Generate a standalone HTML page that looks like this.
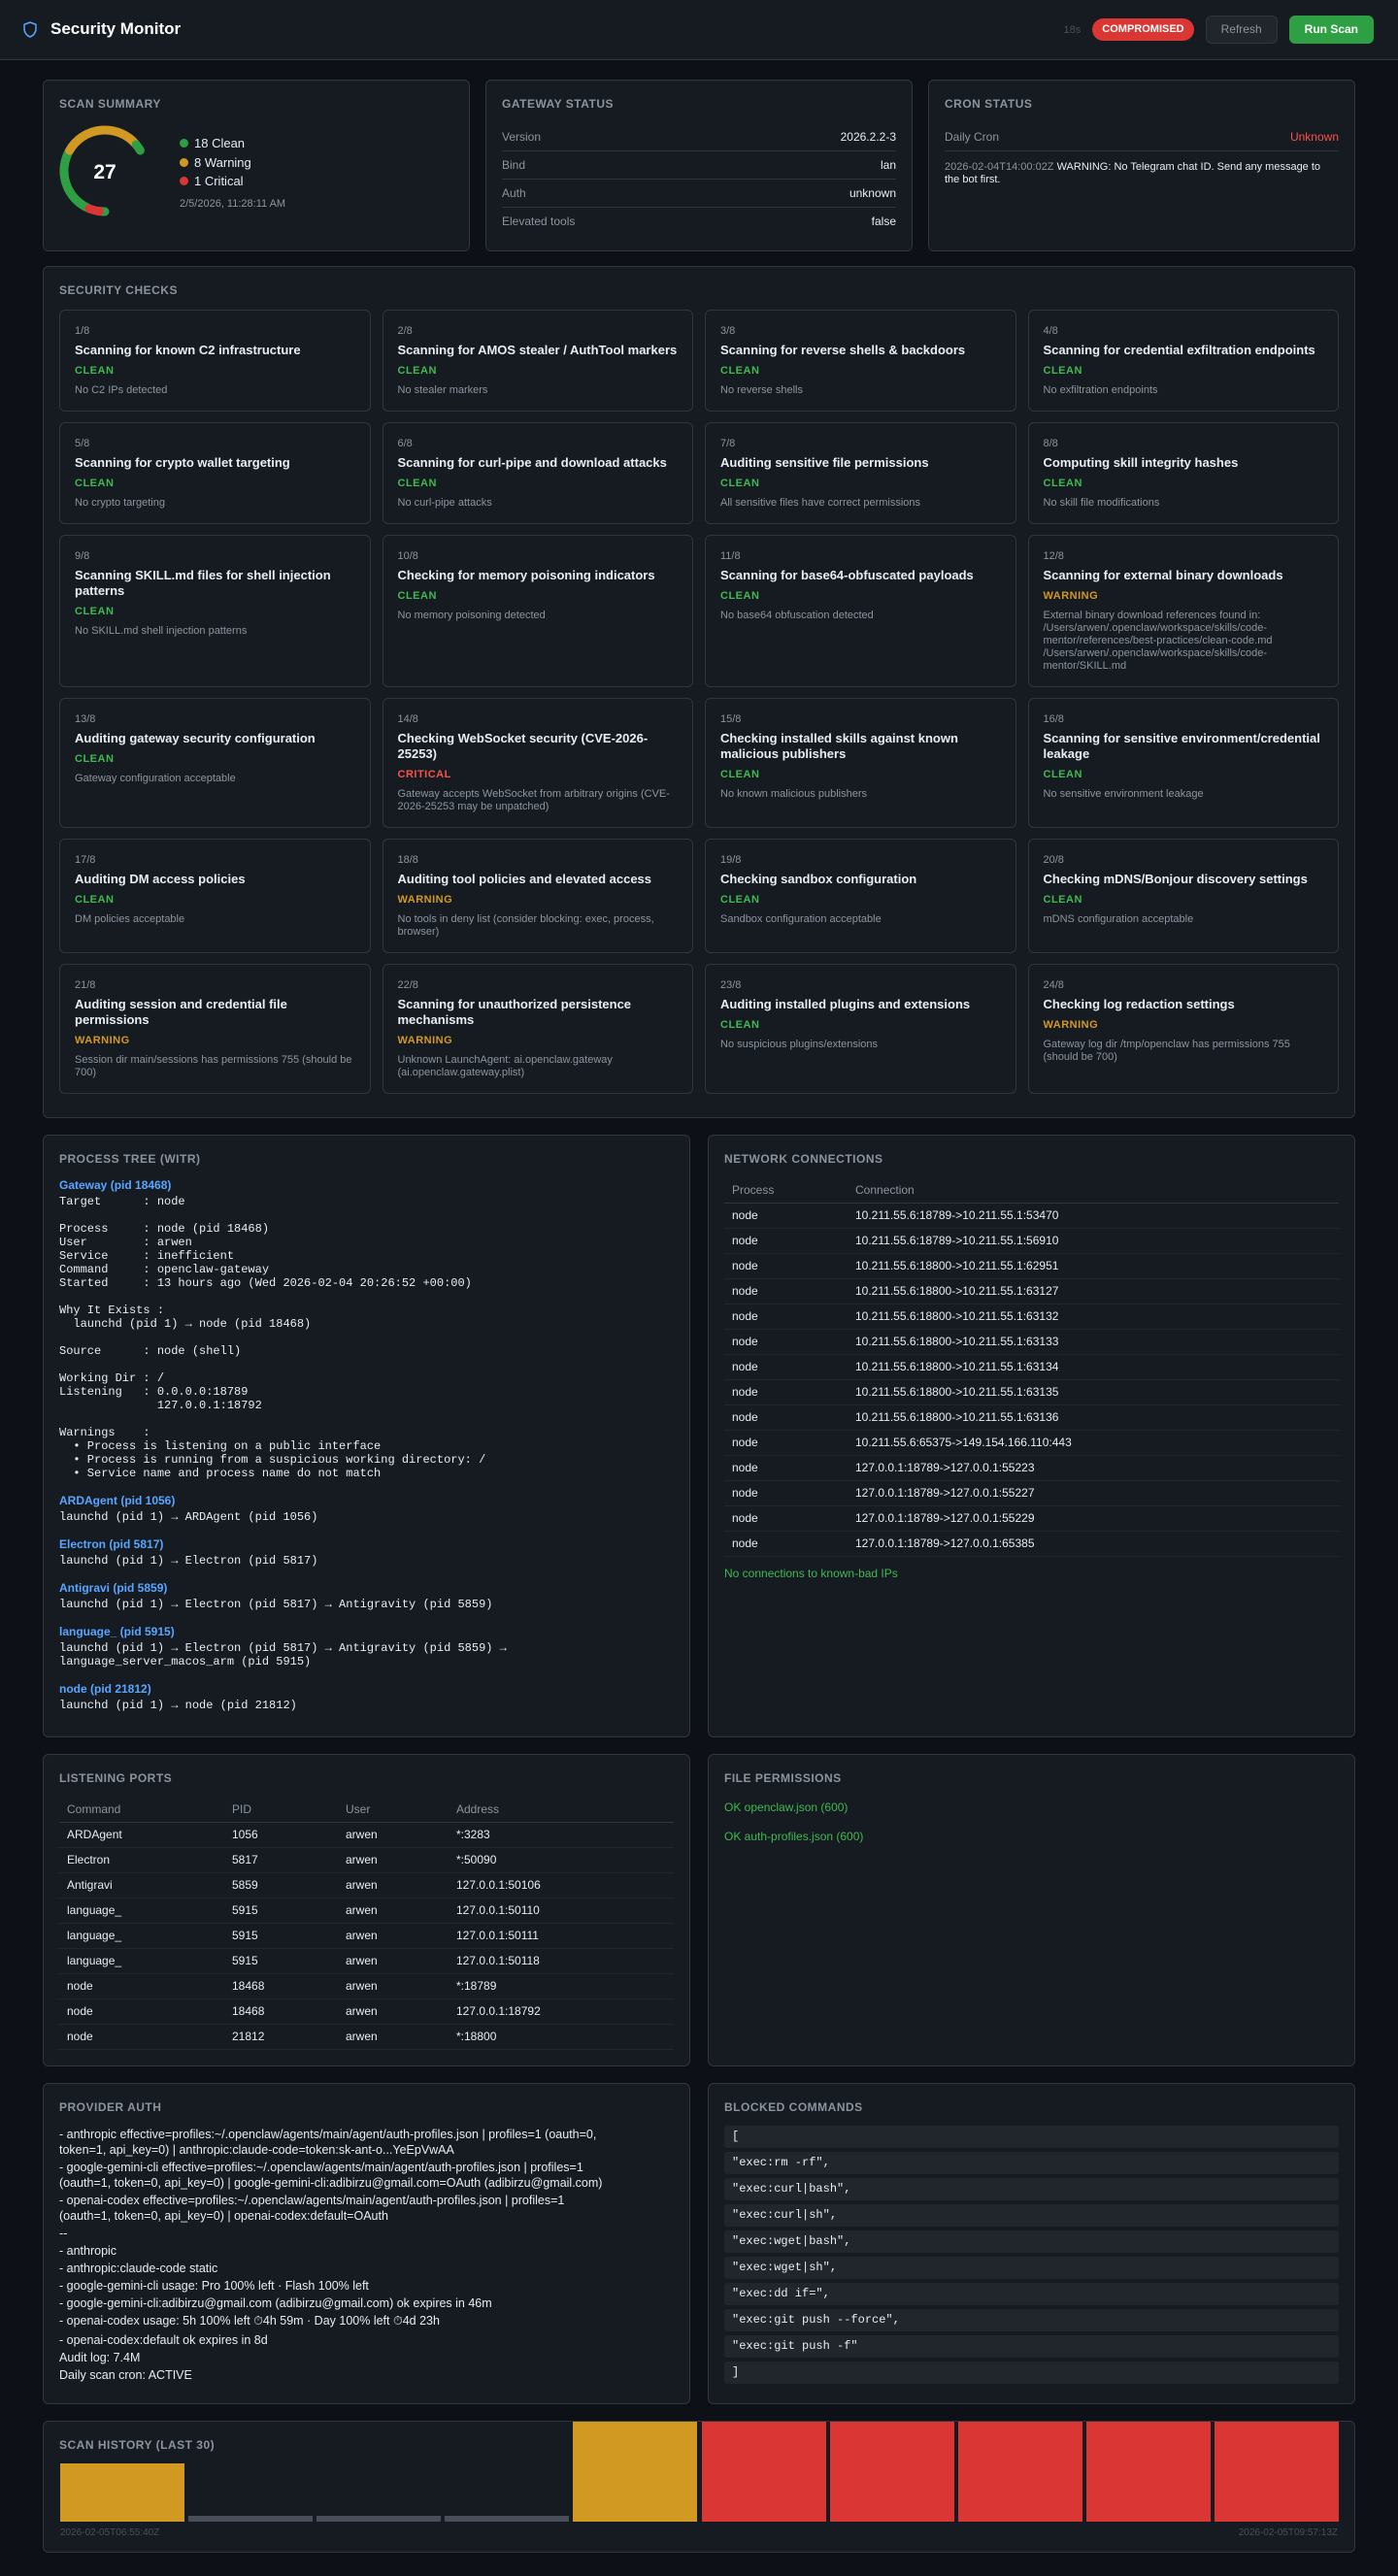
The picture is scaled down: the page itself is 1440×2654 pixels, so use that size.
<!DOCTYPE html>
<html><head><meta charset="utf-8"><style>
*{box-sizing:border-box;margin:0;padding:0}
body{width:1440px;height:2654px;background:#0d1117;color:#e6edf3;font-family:"Liberation Sans",sans-serif;font-size:12px;overflow:hidden}
.hdr{height:62px;background:#161b22;border-bottom:1px solid #30363d;position:relative}
.hdr .t{position:absolute;left:22px;top:20px;font-size:17px;font-weight:bold;display:flex;align-items:center;gap:12px;color:#fff}
.hdr .r{position:absolute;right:25px;top:16px;display:flex;align-items:center;gap:12px}
.pill{background:#da3633;color:#fff;font-weight:bold;font-size:11px;border-radius:12px;height:23px;line-height:23px;padding:0 10px}
.btn{height:29px;line-height:27px;border-radius:6px;padding:0 15px;font-size:12px;border:1px solid #30363d;background:#21262d;color:#8b949e}
.btn.g{background:#2ea043;border-color:#2ea043;color:#fff;font-weight:bold}
.main{padding:20px 44px 0 44px}
.panel{background:#161b22;border:1px solid #30363d;border-radius:6px;padding:16px}
.pt{font-size:12px;font-weight:bold;color:#8b949e;letter-spacing:.5px;text-transform:uppercase;line-height:16px;margin-bottom:12px}
.g3{display:grid;grid-template-columns:1fr 1fr 1fr;gap:16px;height:175px}
.g2{display:grid;grid-template-columns:1fr 1fr;gap:18px;margin-top:17px}
.row{display:flex;justify-content:space-between;padding:7px 0;line-height:14px;border-bottom:1px solid #30363d;font-size:12px}
.row:last-child{border-bottom:none}
.row span:first-child{color:#8b949e}
.grid4{display:grid;grid-template-columns:repeat(4,1fr);gap:11px 12px}
.c{border:1px solid #30363d;border-radius:6px;padding:14px 15px}
.c .m{font-size:11px;color:#8b949e;line-height:14px;margin-bottom:5px}
.c .h{font-size:13px;font-weight:bold;line-height:16px;margin-bottom:6px}
.c .s{font-size:11px;font-weight:bold;letter-spacing:.5px;line-height:14px;margin-bottom:7px}
.c .d{font-size:11px;color:#8b949e;line-height:13px}
.ok{color:#3fb950}.wn{color:#d29922}.cr{color:#f85149}
pre{font-family:"Liberation Mono",monospace;font-size:12px;line-height:14px;color:#e6edf3;white-space:pre}
.ph{color:#58a6ff;font-weight:bold;font-size:12px;line-height:16px;margin-bottom:2px}
.blk{margin-bottom:13px}
table{width:100%;border-collapse:collapse;font-size:12px}
th{text-align:left;color:#8b949e;font-weight:normal;padding:6px 8px 5px;line-height:15px;border-bottom:1px solid #30363d}
td{padding:5px 8px;line-height:15px;border-bottom:1px solid #21262d}
.pa p{line-height:16px;margin-bottom:2px;font-size:12.5px;white-space:nowrap}
.bc{background:#21262d;border-radius:3px;height:23px;line-height:23px;padding:0 8px;margin-bottom:4px;font-family:"Liberation Mono",monospace;font-size:12px}
.hist{position:relative;height:136px;margin-top:17px}
.bar{position:absolute;width:128px;bottom:31px}
</style></head><body>
<div class="hdr">
 <div class="t"><svg width="18" height="19" viewBox="0 0 24 24" fill="none" stroke="#58a6ff" stroke-width="2" stroke-linejoin="round"><path d="M12 2 4 5v6c0 5 3.4 9.4 8 11 4.6-1.6 8-6 8-11V5z"/></svg>Security Monitor</div>
 <div class="r"><span style="color:#484f58;font-size:11px">18s</span><span class="pill">COMPROMISED</span><span class="btn">Refresh</span><span class="btn g">Run Scan</span></div>
</div>
<div class="main">
<div class="g3">
 <div class="panel" style="position:relative"><div class="pt">Scan Summary</div>
  <svg style="position:absolute;left:16px;top:44px" width="96" height="100" viewBox="0 0 96 100" fill="none" stroke-width="9" stroke-linecap="round">
   <path d="M47 91A42 42 0 0 1 41.2 90.6" stroke="#2ea043"/>
   <path d="M29.2 87.1A42 42 0 0 1 10.6 28" stroke="#2ea043"/>
   <path d="M10.6 28A42 42 0 0 1 79.2 22" stroke="#d29922"/>
   <path d="M79.2 22A42 42 0 0 1 83.4 28" stroke="#2ea043"/>
   <path d="M41.2 90.6A42 42 0 0 1 31 88" stroke="#da3633"/>
   <text x="47" y="57" fill="#fff" font-size="21" font-weight="bold" text-anchor="middle" stroke="none" font-family="Liberation Sans">27</text>
  </svg>
  <div style="position:absolute;left:140px;top:55px;font-size:13px;line-height:19.5px">
   <div><span style="display:inline-block;width:9px;height:9px;border-radius:50%;background:#2ea043;margin-right:6px"></span>18 Clean</div>
   <div><span style="display:inline-block;width:9px;height:9px;border-radius:50%;background:#d29922;margin-right:6px"></span>8 Warning</div>
   <div><span style="display:inline-block;width:9px;height:9px;border-radius:50%;background:#da3633;margin-right:6px"></span>1 Critical</div>
   <div style="font-size:11px;color:#8b949e;margin-top:4px">2/5/2026, 11:28:11 AM</div>
  </div>
 </div>
 <div class="panel"><div class="pt">Gateway Status</div>
  <div class="row"><span>Version</span><span>2026.2.2-3</span></div>
  <div class="row"><span>Bind</span><span>lan</span></div>
  <div class="row"><span>Auth</span><span>unknown</span></div>
  <div class="row"><span>Elevated tools</span><span>false</span></div>
 </div>
 <div class="panel"><div class="pt">Cron Status</div>
  <div class="row" style="border-bottom:1px solid #30363d"><span>Daily Cron</span><span class="cr">Unknown</span></div>
  <div style="font-size:11px;line-height:13px;margin-top:10px;padding-right:12px"><span style="color:#8b949e">2026-02-04T14:00:02Z</span> WARNING: No Telegram chat ID. Send any message to the bot first.</div>
 </div>
</div>

<div class="panel" style="margin-top:17px;padding-bottom:24px"><div class="pt">Security Checks</div>
<div class="grid4">
<div class="c"><div class="m">1/8</div><div class="h">Scanning for known C2 infrastructure</div><div class="s ok">CLEAN</div><div class="d">No C2 IPs detected</div></div>
<div class="c"><div class="m">2/8</div><div class="h">Scanning for AMOS stealer / AuthTool markers</div><div class="s ok">CLEAN</div><div class="d">No stealer markers</div></div>
<div class="c"><div class="m">3/8</div><div class="h">Scanning for reverse shells &amp; backdoors</div><div class="s ok">CLEAN</div><div class="d">No reverse shells</div></div>
<div class="c"><div class="m">4/8</div><div class="h">Scanning for credential exfiltration endpoints</div><div class="s ok">CLEAN</div><div class="d">No exfiltration endpoints</div></div>
<div class="c"><div class="m">5/8</div><div class="h">Scanning for crypto wallet targeting</div><div class="s ok">CLEAN</div><div class="d">No crypto targeting</div></div>
<div class="c"><div class="m">6/8</div><div class="h">Scanning for curl-pipe and download attacks</div><div class="s ok">CLEAN</div><div class="d">No curl-pipe attacks</div></div>
<div class="c"><div class="m">7/8</div><div class="h">Auditing sensitive file permissions</div><div class="s ok">CLEAN</div><div class="d">All sensitive files have correct permissions</div></div>
<div class="c"><div class="m">8/8</div><div class="h">Computing skill integrity hashes</div><div class="s ok">CLEAN</div><div class="d">No skill file modifications</div></div>
<div class="c"><div class="m">9/8</div><div class="h">Scanning SKILL.md files for shell injection patterns</div><div class="s ok">CLEAN</div><div class="d">No SKILL.md shell injection patterns</div></div>
<div class="c"><div class="m">10/8</div><div class="h">Checking for memory poisoning indicators</div><div class="s ok">CLEAN</div><div class="d">No memory poisoning detected</div></div>
<div class="c"><div class="m">11/8</div><div class="h">Scanning for base64-obfuscated payloads</div><div class="s ok">CLEAN</div><div class="d">No base64 obfuscation detected</div></div>
<div class="c"><div class="m">12/8</div><div class="h">Scanning for external binary downloads</div><div class="s wn">WARNING</div><div class="d">External binary download references found in: /Users/arwen/.openclaw/workspace/skills/code-mentor/references/best-practices/clean-code.md /Users/arwen/.openclaw/workspace/skills/code-mentor/SKILL.md</div></div>
<div class="c"><div class="m">13/8</div><div class="h">Auditing gateway security configuration</div><div class="s ok">CLEAN</div><div class="d">Gateway configuration acceptable</div></div>
<div class="c"><div class="m">14/8</div><div class="h">Checking WebSocket security (CVE-2026-25253)</div><div class="s cr">CRITICAL</div><div class="d">Gateway accepts WebSocket from arbitrary origins (CVE-2026-25253 may be unpatched)</div></div>
<div class="c"><div class="m">15/8</div><div class="h">Checking installed skills against known malicious publishers</div><div class="s ok">CLEAN</div><div class="d">No known malicious publishers</div></div>
<div class="c"><div class="m">16/8</div><div class="h">Scanning for sensitive environment/credential leakage</div><div class="s ok">CLEAN</div><div class="d">No sensitive environment leakage</div></div>
<div class="c"><div class="m">17/8</div><div class="h">Auditing DM access policies</div><div class="s ok">CLEAN</div><div class="d">DM policies acceptable</div></div>
<div class="c"><div class="m">18/8</div><div class="h">Auditing tool policies and elevated access</div><div class="s wn">WARNING</div><div class="d">No tools in deny list (consider blocking: exec, process, browser)</div></div>
<div class="c"><div class="m">19/8</div><div class="h">Checking sandbox configuration</div><div class="s ok">CLEAN</div><div class="d">Sandbox configuration acceptable</div></div>
<div class="c"><div class="m">20/8</div><div class="h">Checking mDNS/Bonjour discovery settings</div><div class="s ok">CLEAN</div><div class="d">mDNS configuration acceptable</div></div>
<div class="c"><div class="m">21/8</div><div class="h">Auditing session and credential file permissions</div><div class="s wn">WARNING</div><div class="d">Session dir main/sessions has permissions 755 (should be 700)</div></div>
<div class="c"><div class="m">22/8</div><div class="h">Scanning for unauthorized persistence mechanisms</div><div class="s wn">WARNING</div><div class="d">Unknown LaunchAgent: ai.openclaw.gateway (ai.openclaw.gateway.plist)</div></div>
<div class="c"><div class="m">23/8</div><div class="h">Auditing installed plugins and extensions</div><div class="s ok">CLEAN</div><div class="d">No suspicious plugins/extensions</div></div>
<div class="c"><div class="m">24/8</div><div class="h">Checking log redaction settings</div><div class="s wn">WARNING</div><div class="d">Gateway log dir /tmp/openclaw has permissions 755 (should be 700)</div></div>
</div></div>

<div class="g2">
<div class="panel" style="padding-bottom:12px"><div class="pt" style="margin-bottom:11px">Process Tree (WITR)</div>
<div class="blk"><div class="ph">Gateway (pid 18468)</div><pre>Target      : node

Process     : node (pid 18468)
User        : arwen
Service     : inefficient
Command     : openclaw-gateway
Started     : 13 hours ago (Wed 2026-02-04 20:26:52 +00:00)

Why It Exists :
  launchd (pid 1) → node (pid 18468)

Source      : node (shell)

Working Dir : /
Listening   : 0.0.0.0:18789
              127.0.0.1:18792

Warnings    :
  • Process is listening on a public interface
  • Process is running from a suspicious working directory: /
  • Service name and process name do not match</pre></div>
<div class="blk"><div class="ph">ARDAgent (pid 1056)</div><pre>launchd (pid 1) → ARDAgent (pid 1056)</pre></div>
<div class="blk"><div class="ph">Electron (pid 5817)</div><pre>launchd (pid 1) → Electron (pid 5817)</pre></div>
<div class="blk"><div class="ph">Antigravi (pid 5859)</div><pre>launchd (pid 1) → Electron (pid 5817) → Antigravity (pid 5859)</pre></div>
<div class="blk"><div class="ph">language_ (pid 5915)</div><pre>launchd (pid 1) → Electron (pid 5817) → Antigravity (pid 5859) →
language_server_macos_arm (pid 5915)</pre></div>
<div class="blk"><div class="ph">node (pid 21812)</div><pre>launchd (pid 1) → node (pid 21812)</pre></div>
</div>
<div class="panel"><div class="pt" style="margin-bottom:11px">Network Connections</div>
<table><tr><th style="width:127px">Process</th><th>Connection</th></tr>
<tr><td>node</td><td>10.211.55.6:18789-&gt;10.211.55.1:53470</td></tr>
<tr><td>node</td><td>10.211.55.6:18789-&gt;10.211.55.1:56910</td></tr>
<tr><td>node</td><td>10.211.55.6:18800-&gt;10.211.55.1:62951</td></tr>
<tr><td>node</td><td>10.211.55.6:18800-&gt;10.211.55.1:63127</td></tr>
<tr><td>node</td><td>10.211.55.6:18800-&gt;10.211.55.1:63132</td></tr>
<tr><td>node</td><td>10.211.55.6:18800-&gt;10.211.55.1:63133</td></tr>
<tr><td>node</td><td>10.211.55.6:18800-&gt;10.211.55.1:63134</td></tr>
<tr><td>node</td><td>10.211.55.6:18800-&gt;10.211.55.1:63135</td></tr>
<tr><td>node</td><td>10.211.55.6:18800-&gt;10.211.55.1:63136</td></tr>
<tr><td>node</td><td>10.211.55.6:65375-&gt;149.154.166.110:443</td></tr>
<tr><td>node</td><td>127.0.0.1:18789-&gt;127.0.0.1:55223</td></tr>
<tr><td>node</td><td>127.0.0.1:18789-&gt;127.0.0.1:55227</td></tr>
<tr><td>node</td><td>127.0.0.1:18789-&gt;127.0.0.1:55229</td></tr>
<tr><td>node</td><td>127.0.0.1:18789-&gt;127.0.0.1:65385</td></tr>
</table>
<div class="ok" style="margin-top:10px;line-height:15px">No connections to known-bad IPs</div>
</div>
</div>

<div class="g2">
<div class="panel"><div class="pt" style="margin-bottom:11px">Listening Ports</div>
<table><tr><th style="width:170px">Command</th><th style="width:117px">PID</th><th style="width:114px">User</th><th>Address</th></tr>
<tr><td>ARDAgent</td><td>1056</td><td>arwen</td><td>*:3283</td></tr>
<tr><td>Electron</td><td>5817</td><td>arwen</td><td>*:50090</td></tr>
<tr><td>Antigravi</td><td>5859</td><td>arwen</td><td>127.0.0.1:50106</td></tr>
<tr><td>language_</td><td>5915</td><td>arwen</td><td>127.0.0.1:50110</td></tr>
<tr><td>language_</td><td>5915</td><td>arwen</td><td>127.0.0.1:50111</td></tr>
<tr><td>language_</td><td>5915</td><td>arwen</td><td>127.0.0.1:50118</td></tr>
<tr><td>node</td><td>18468</td><td>arwen</td><td>*:18789</td></tr>
<tr><td>node</td><td>18468</td><td>arwen</td><td>127.0.0.1:18792</td></tr>
<tr><td>node</td><td>21812</td><td>arwen</td><td>*:18800</td></tr>
</table></div>
<div class="panel"><div class="pt">File Permissions</div>
<div class="ok" style="line-height:16px;margin-top:14px">OK openclaw.json (600)</div>
<div class="ok" style="line-height:16px;margin-top:14px">OK auth-profiles.json (600)</div>
</div>
</div>

<div class="g2">
<div class="panel pa" style="overflow:hidden"><div class="pt">Provider Auth</div>
<p>- anthropic effective=profiles:~/.openclaw/agents/main/agent/auth-profiles.json | profiles=1 (oauth=0,<br>token=1, api_key=0) | anthropic:claude-code=token:sk-ant-o...YeEpVwAA</p>
<p>- google-gemini-cli effective=profiles:~/.openclaw/agents/main/agent/auth-profiles.json | profiles=1<br>(oauth=1, token=0, api_key=0) | google-gemini-cli:adibirzu@gmail.com=OAuth (adibirzu@gmail.com)</p>
<p>- openai-codex effective=profiles:~/.openclaw/agents/main/agent/auth-profiles.json | profiles=1<br>(oauth=1, token=0, api_key=0) | openai-codex:default=OAuth</p>
<p>--</p>
<p>- anthropic</p>
<p>- anthropic:claude-code static</p>
<p>- google-gemini-cli usage: Pro 100% left · Flash 100% left</p>
<p>- google-gemini-cli:adibirzu@gmail.com (adibirzu@gmail.com) ok expires in 46m</p>
<p>- openai-codex usage: 5h 100% left ⏱4h 59m · Day 100% left ⏱4d 23h</p>
<p style="margin-top:4px">- openai-codex:default ok expires in 8d</p>
<p>Audit log: 7.4M</p>
<p>Daily scan cron: ACTIVE</p>
</div>
<div class="panel"><div class="pt" style="margin-bottom:11px">Blocked Commands</div>
<div class="bc">[</div>
<div class="bc">"exec:rm -rf",</div>
<div class="bc">"exec:curl|bash",</div>
<div class="bc">"exec:curl|sh",</div>
<div class="bc">"exec:wget|bash",</div>
<div class="bc">"exec:wget|sh",</div>
<div class="bc">"exec:dd if=",</div>
<div class="bc">"exec:git push --force",</div>
<div class="bc">"exec:git push -f"</div>
<div class="bc">]</div>
</div>
</div>

<div class="panel hist"><div class="pt">Scan History (Last 30)</div>
<div class="bar" style="left:17px;height:60px;background:#d29922"></div>
<div class="bar" style="left:149px;height:6px;background:#484f58"></div>
<div class="bar" style="left:281px;height:6px;background:#484f58"></div>
<div class="bar" style="left:413px;height:6px;background:#484f58"></div>
<div class="bar" style="left:545px;height:103px;background:#d29922"></div>
<div class="bar" style="left:678px;height:103px;background:#da3633"></div>
<div class="bar" style="left:810px;height:103px;background:#da3633"></div>
<div class="bar" style="left:942px;height:103px;background:#da3633"></div>
<div class="bar" style="left:1074px;height:103px;background:#da3633"></div>
<div class="bar" style="left:1206px;height:103px;background:#da3633"></div>
<div style="position:absolute;left:17px;top:109px;font-size:10px;color:#484f58">2026-02-05T06:55:40Z</div>
<div style="position:absolute;right:17px;top:109px;font-size:10px;color:#484f58">2026-02-05T09:57:13Z</div>
</div>
</div>
</body></html>
